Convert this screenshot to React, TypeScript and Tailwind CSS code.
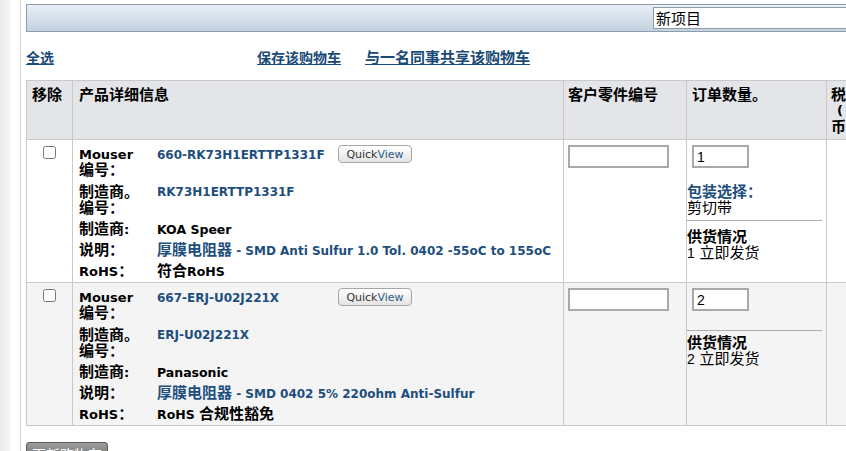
import React from 'react';

// Cart table rows
type Item = {
  mouser: string;
  mfrNo: string;
  mfr: string;
  descTail: string;
  rohs: React.ReactNode;
  qty: string;
  stock: string;
  packaging: boolean;
  shade: boolean;
};

const items: Item[] = [
  {
    mouser: '660-RK73H1ERTTP1331F',
    mfrNo: 'RK73H1ERTTP1331F',
    mfr: 'KOA Speer',
    descTail: ' - SMD Anti Sulfur 1.0 Tol. 0402 -55oC to 155oC',
    rohs: (
      <>
        <Z>符合</Z>RoHS
      </>
    ),
    qty: '1',
    stock: '1',
    packaging: true,
    shade: false,
  },
  {
    mouser: '667-ERJ-U02J221X',
    mfrNo: 'ERJ-U02J221X',
    mfr: 'Panasonic',
    descTail: ' - SMD 0402 5% 220ohm Anti-Sulfur',
    rohs: (
      <>
        RoHS <Z>合规性豁免</Z>
      </>
    ),
    qty: '2',
    stock: '2',
    packaging: false,
    shade: true,
  },
];

// CJK text is a size larger than the latin text next to it
function Z({ children }: { children: React.ReactNode }) {
  return <span className="text-[15px] leading-[12px]">{children}</span>;
}

function QuickView() {
  return (
    <span className="inline-flex items-center justify-center w-[74px] h-[18px] rounded-[4px] border border-[#a6a6a6] bg-linear-to-b from-white to-[#e4e4e4] text-[11px] font-normal leading-none">
      <span className="text-[#333]">Quick</span>
      <span className="text-[#2d5b8a]">View</span>
    </span>
  );
}

function Details({ p }: { p: Item }) {
  return (
    <div className="grid grid-cols-[78px_181px_max-content] gap-y-[5px] leading-4 text-[13px] font-bold">
      <div>
        Mouser
        <br />
        <Z>编号：</Z>
      </div>
      <div className="text-[12px] text-[#1d4e7e]">{p.mouser}</div>
      <div className="-mt-[2px]">
        <QuickView />
      </div>

      <div className="pt-px">
        <Z>制造商。</Z>
        <br />
        <Z>编号：</Z>
      </div>
      <div className="col-span-2 text-[12px] text-[#1d4e7e]">{p.mfrNo}</div>

      <div>
        <Z>制造商</Z>:
      </div>
      <div className="col-span-2 text-[12.5px]">{p.mfr}</div>

      <div>
        <Z>说明：</Z>
      </div>
      <div className="col-span-2 text-[12px] text-[#1d4e7e] whitespace-nowrap">
        <Z>厚膜电阻器</Z>
        {p.descTail}
      </div>

      <div>
        RoHS<Z>：</Z>
      </div>
      <div className="col-span-2 text-[12.5px]">{p.rohs}</div>
    </div>
  );
}

function Row({ p }: { p: Item }) {
  return (
    <tr className={p.shade ? 'h-[143px] bg-[#f4f4f4]' : 'h-[143px] bg-white'}>
      <td className="align-top border border-[#c9c9c9] pt-[6px]">
        <div className="flex justify-center">
          <input type="checkbox" className="w-[13px] h-[13px] m-0" readOnly />
        </div>
      </td>
      <td className="align-top border border-[#c9c9c9] pt-[7px] pl-[6px]">
        <Details p={p} />
      </td>
      <td className="align-top border border-[#c9c9c9] pt-[5px] pl-[4px]">
        <input
          className="block w-[101px] h-[23px] border-2 border-[#a9a9a9] bg-white"
          defaultValue=""
        />
      </td>
      <td className="align-top border border-[#c9c9c9] pt-[5px] text-[15px] leading-4">
        <input
          className="block ml-[5px] w-[57px] h-[23px] border-2 border-[#a9a9a9] bg-white pl-[3px] text-[14px] font-['Liberation_Sans',sans-serif]"
          defaultValue={p.qty}
        />
        {p.packaging ? (
          <div className="mt-[16px]">
            <div className="font-bold text-[#1d4e7e]">包装选择：</div>
            <div>剪切带</div>
          </div>
        ) : null}
        <div
          className={
            p.packaging
              ? 'mt-[4px] mr-[4px] border-t border-[#adadad]'
              : 'mt-[19px] mr-[4px] border-t border-[#adadad]'
          }
        />
        <div className={p.packaging ? 'mt-[8px]' : 'mt-[4px]'}>
          <div className="font-bold">供货情况</div>
          <div>
            <span className="text-[14px] font-['Liberation_Sans',sans-serif]">{p.stock}</span> 立即发货
          </div>
        </div>
      </td>
      <td className="align-top border border-[#c9c9c9]" />
    </tr>
  );
}

export default function App() {
  return (
    <div className="w-[846px] h-[451px] overflow-hidden bg-white flex font-['DejaVu_Sans','Noto_Sans_CJK_SC',sans-serif] text-black">
      <div className="w-[11px] shrink-0 bg-linear-to-r from-[#e9e9e9] to-[#f7f7f7]" />
      <div className="w-[9px] shrink-0" />
      <div className="w-px shrink-0 bg-[#d3d3d3]" />

      <div className="shrink-0 w-[900px] pl-[5px] pt-[4px]">
        {/* top bar with new-project box */}
        <div className="h-[28px] border border-[#8e9cab] bg-linear-to-b from-[#e8eff6] to-[#c3d2e0] pl-[626px] pt-[2px]">
          <input
            className="block h-[22px] w-[260px] border border-[#8d99a6] bg-white pl-[2px] text-[15px] font-['Noto_Sans_CJK_SC',sans-serif]"
            defaultValue="新项目"
          />
        </div>

        {/* cart links */}
        <div className="mt-[16px] h-[18px] flex items-center font-bold text-[#1a4a78] font-['Noto_Sans_CJK_SC',sans-serif]">
          <a className="underline w-[231px] text-[14px]">全选</a>
          <a className="underline mr-[24px] text-[14px]">保存该购物车</a>
          <a className="underline text-[15px]">与一名同事共享该购物车</a>
        </div>

        <table className="mt-[14px] table-fixed border-collapse w-[880px]">
          <colgroup>
            <col className="w-[46px]" />
            <col className="w-[491px]" />
            <col className="w-[123px]" />
            <col className="w-[140px]" />
            <col className="w-[80px]" />
          </colgroup>
          <thead>
            <tr className="h-[59px] bg-[#e3e5e9] text-[15px] font-bold leading-4">
              <th className="align-top text-left border border-[#c9c9c9] pt-[6px] pl-[5px]">移除</th>
              <th className="align-top text-left border border-[#c9c9c9] pt-[6px] pl-[6px]">产品详细信息</th>
              <th className="align-top text-left border border-[#c9c9c9] pt-[6px] pl-[4px]">客户零件编号</th>
              <th className="align-top text-left border border-[#c9c9c9] pt-[6px] pl-[5px]">订单数量。</th>
              <th className="align-top text-left border border-[#c9c9c9] pt-[6px] pl-[4px]">
                <div>税</div>
                <div className="pl-[6px] text-[13px]">(</div>
                <div>币</div>
              </th>
            </tr>
          </thead>
          <tbody>
            {items.map((p) => (
              <Row key={p.mouser} p={p} />
            ))}
          </tbody>
        </table>

        <button className="mt-[16px] block w-[82px] h-[24px] rounded-t-[3px] border border-[#5a5a5a] bg-linear-to-b from-[#9b9b9b] to-[#6c6c6c] text-white text-[14px] leading-[22px] font-['Noto_Sans_CJK_SC',sans-serif]">
          更新购物车
        </button>
      </div>
    </div>
  );
}
